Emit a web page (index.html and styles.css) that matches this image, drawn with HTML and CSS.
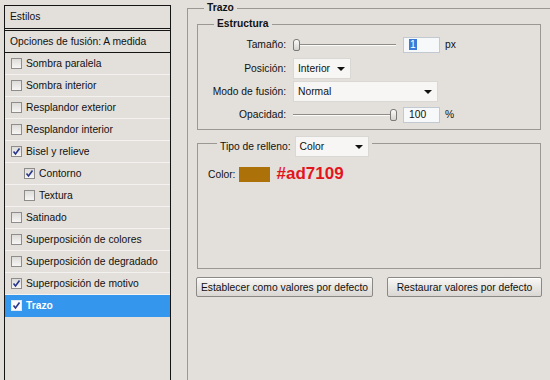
FILE: index.html
```html
<!DOCTYPE html>
<html lang="es">
  <head>
    <meta charset="utf-8">
    <title>Estilo de capa - Trazo</title>
    <link rel="stylesheet" href="styles.css">
  </head>
  <body>
    <div class="page">
      <!-- lista de estilos -->
      <aside class="styles-panel">
        <div class="panel-title">Estilos</div>
        <div class="panel-blend">Opciones de fusión: A medida</div>
        <ul class="effect-list">
          <li class="effect"><span class="check"></span>Sombra paralela</li>
          <li class="effect"><span class="check"></span>Sombra interior</li>
          <li class="effect"><span class="check"></span>Resplandor exterior</li>
          <li class="effect"><span class="check"></span>Resplandor interior</li>
          <li class="effect"><span class="check"><svg viewBox="0 0 9 9"><path d="M1.5 4.5 L3.5 7 L7.5 1.5"/></svg></span>Bisel y relieve</li>
          <li class="effect sub"><span class="check"><svg viewBox="0 0 9 9"><path d="M1.5 4.5 L3.5 7 L7.5 1.5"/></svg></span>Contorno</li>
          <li class="effect sub"><span class="check"></span>Textura</li>
          <li class="effect"><span class="check"></span>Satinado</li>
          <li class="effect"><span class="check"></span>Superposición de colores</li>
          <li class="effect"><span class="check"></span>Superposición de degradado</li>
          <li class="effect"><span class="check"><svg viewBox="0 0 9 9"><path d="M1.5 4.5 L3.5 7 L7.5 1.5"/></svg></span>Superposición de motivo</li>
          <li class="effect selected"><span class="check"><svg viewBox="0 0 9 9"><path d="M1.5 4.5 L3.5 7 L7.5 1.5"/></svg></span>Trazo</li>
        </ul>
      </aside>

      <!-- opciones del trazo -->
      <main class="settings">
        <fieldset class="group group-outer">
          <legend>Trazo</legend>

          <fieldset class="group group-structure">
            <legend>Estructura</legend>

            <div class="field field-first">
              <span class="field-label">Tamaño:</span>
              <div class="slider">
                <span class="track"></span>
                <span class="thumb" style="left: 0px"></span>
              </div>
              <span class="num-input"><span class="text-selected">1</span></span>
              <span class="unit">px</span>
            </div>

            <div class="field">
              <span class="field-label">Posición:</span>
              <span class="select select-position">Interior</span>
            </div>

            <div class="field">
              <span class="field-label">Modo de fusión:</span>
              <span class="select select-mode">Normal</span>
            </div>

            <div class="field">
              <span class="field-label">Opacidad:</span>
              <div class="slider">
                <span class="track"></span>
                <span class="thumb" style="left: 97px"></span>
              </div>
              <span class="num-input">100</span>
              <span class="unit">%</span>
            </div>
          </fieldset>

          <fieldset class="group group-fill">
            <legend>
              <div class="fill-type">
                <span>Tipo de relleno:</span>
                <span class="select select-fill">Color</span>
              </div>
            </legend>
            <div class="fill-body">
              <div class="color-row">
                <span>Color:</span>
                <span class="swatch"></span>
                <span class="hex">#ad7109</span>
              </div>
            </div>
          </fieldset>

          <div class="actions">
            <button class="btn btn-default">Establecer como valores por defecto</button>
            <button class="btn btn-reset">Restaurar valores por defecto</button>
          </div>
        </fieldset>
      </main>
    </div>
  </body>
</html>
```

FILE: styles.css
```css
* {
  box-sizing: border-box;
}

body {
  margin: 0;
  height: 380px;
  overflow: hidden;
  background-color: #e3e0dc;
  color: #111;
  font-family: "Liberation Sans", Arial, sans-serif;
  font-size: 10.3px;
}

.page {
  display: flex;
  align-items: flex-start;
}

/* panel izquierdo (sigue por debajo del borde) */
.styles-panel {
  flex: none;
  width: 167px;
  height: 375px;
  margin: 5px 0 0 4px;
  border: 1px solid #151515;
  border-bottom: none;
}

.panel-title {
  height: 25px;
  line-height: 22px;
  padding-left: 5px;
  border-bottom: 3px double #151515;
}

.panel-blend {
  height: 22px;
  line-height: 21px;
  padding-left: 5px;
  border-bottom: 1px solid #151515;
}

.effect-list {
  list-style: none;
  margin: 0;
  padding: 0;
}

.effect {
  display: flex;
  align-items: center;
  height: 22px;
  padding-left: 6px;
  border-bottom: 1px solid #f3f2f0;
}

.effect.sub {
  padding-left: 19px;
}

.effect.selected {
  background-color: #3596ee;
  color: #fff;
  font-weight: bold;
  border-bottom-color: #3596ee;
}

.check {
  display: flex;
  align-items: center;
  justify-content: center;
  width: 11px;
  height: 11px;
  margin-right: 4px;
  border: 1px solid #8e8d8b;
  background: linear-gradient(#dedcd9, #f7f6f4);
}

.selected .check {
  background: #fafafa;
  border-color: #dfe9f5;
}

.check svg {
  width: 9px;
  height: 9px;
}

.check path {
  fill: none;
  stroke: #27368a;
  stroke-width: 1.6;
}

/* grupos */
.settings {
  flex: none;
  width: 363px;
  margin-left: 16px;
}

.group {
  margin: 0;
  padding: 0;
  min-width: 0;
  border: 1px solid #9b9894;
}

.group > legend {
  margin-left: 16px;
  padding: 0 3px;
  font-weight: bold;
  line-height: 12px;
}

/* el grupo exterior sigue fuera del recorte: sin borde derecho ni inferior */
.group-outer {
  width: 363px;
  height: 378px;
  margin-top: 2px;
  border-right: none;
  border-bottom: none;
}

.group-structure {
  width: 344px;
  margin: 4px 0 0 9px;
  padding: 2px 0 3px 0;
}

.field {
  display: flex;
  align-items: center;
  height: 23px;
}

.field-first {
  height: 25px;
}

.field-label {
  width: 88px;
  margin-right: 7px;
  text-align: right;
}

.slider {
  position: relative;
  width: 103px;
  height: 12px;
}

.track {
  position: absolute;
  left: 0;
  right: 0;
  top: 5px;
  height: 2px;
  border-top: 1px solid #8f8c88;
  border-bottom: 1px solid #fbfbfa;
}

.thumb {
  position: absolute;
  top: 0;
  width: 7px;
  height: 12px;
  border: 1px solid #7c7a77;
  border-radius: 3px 3px 2px 2px;
  background: linear-gradient(#fbfbfa, #d4d2ce);
}

.num-input {
  width: 37px;
  height: 16px;
  margin-left: 7px;
  padding-left: 5px;
  line-height: 14px;
  border: 1px solid #c3c9d1;
  background-color: #f6f8fa;
}

.text-selected {
  padding: 0 1px;
  background-color: #3b7bd6;
  color: #fff;
}

.unit {
  margin-left: 5px;
}

.select {
  position: relative;
  display: flex;
  align-items: center;
  height: 21px;
  padding-left: 4px;
  border: 1px solid #dad8d4;
  background-color: #f7f6f4;
  font-weight: normal;
}

.select::after {
  content: "";
  position: absolute;
  right: 5px;
  top: 8px;
  border-left: 4px solid transparent;
  border-right: 4px solid transparent;
  border-top: 4px solid #111;
}

.select-position {
  width: 58px;
}

.select-mode {
  width: 145px;
}

.select-fill {
  width: 74px;
}

/* relleno */
.group-fill {
  width: 344px;
  margin-left: 9px;
}

.group-fill > legend {
  margin-left: 19px;
  padding: 6px 3px 0;
  font-weight: normal;
  line-height: normal;
}

.fill-type {
  display: flex;
  align-items: center;
  gap: 4px;
}

.fill-body {
  height: 111px;
  padding: 8px 0 0 10px;
}

.color-row {
  display: flex;
  align-items: center;
  height: 18px;
}

.swatch {
  width: 31px;
  height: 15px;
  margin: 0 6px 0 4px;
  background-color: #ad7109;
}

.hex {
  color: #e3151c;
  font-size: 17px;
  font-weight: bold;
}

/* botones */
.actions {
  display: flex;
  gap: 14px;
  margin: 8px 0 0 8px;
}

.btn {
  height: 20px;
  padding: 0;
  border: 1px solid #8b8985;
  border-radius: 2px;
  background: linear-gradient(#f8f7f5, #dad7d3);
  box-shadow: inset 0 1px 0 #fff;
  color: #111;
  font-family: inherit;
  font-size: 10.3px;
}

.btn-default {
  width: 177px;
}

.btn-reset {
  width: 155px;
}
```
